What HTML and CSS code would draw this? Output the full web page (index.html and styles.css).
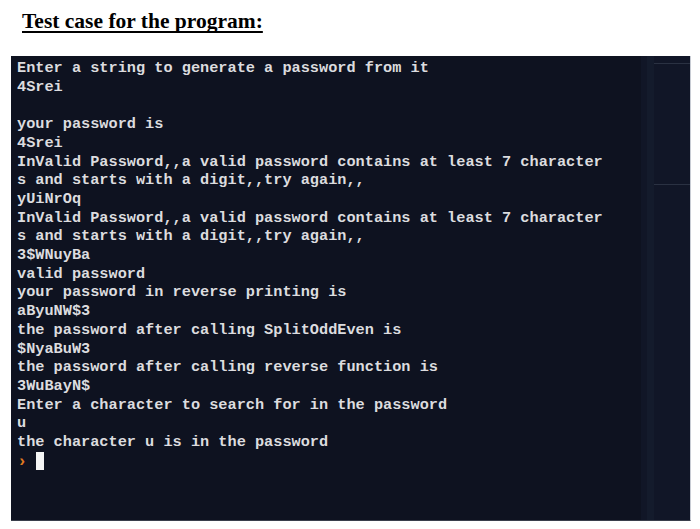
FILE: index.html
```html
<!DOCTYPE html>
<html>
<head>
<meta charset="utf-8">
<link rel="stylesheet" href="styles.css">
</head>
<body>
<h1 class="title">Test case for the program:</h1>
<div class="terminal">
  <pre class="output">Enter a string to generate a password from it
4Srei

your password is
4Srei
InValid Password,,a valid password contains at least 7 character
s and starts with a digit,,try again,,
yUiNrOq
InValid Password,,a valid password contains at least 7 character
s and starts with a digit,,try again,,
3$WNuyBa
valid password
your password in reverse printing is
aByuNW$3
the password after calling SplitOddEven is
$NyaBuW3
the password after calling reverse function is
3WuBayN$
Enter a character to search for in the password
u
the character u is in the password
<span class="prompt">›</span> <span class="cursor"></span></pre>
  <div class="side">
    <div class="side-strip"></div>
    <div class="side-body">
      <div class="side-line first"></div>
      <div class="side-line second"></div>
    </div>
  </div>
</div>
</body>
</html>
```

FILE: styles.css
```css
html, body {
  margin: 0;
  padding: 0;
  background: #ffffff;
}
body {
  width: 700px;
  height: 529px;
  overflow: hidden;
}
.title {
  margin: 0;
  padding: 9px 0 0 22px;
  height: 56px;
  box-sizing: border-box;
  font-family: "Liberation Serif", "Times New Roman", serif;
  font-weight: bold;
  font-size: 21.5px;
  line-height: 24px;
  color: #000;
  text-decoration: underline;
  text-decoration-thickness: 2px;
  text-underline-offset: 3px;
  text-decoration-skip-ink: none;
}
.terminal {
  margin: 0 9px 0 11px;
  height: 465px;
  background: #0e1220;
  display: flex;
  border-right: 1px solid #c8ccd4;
  border-bottom: 1px solid #3a3f4c;
  box-sizing: border-box;
}
.output {
  flex: 1;
  margin: 0;
  padding: 3px 0 0 6px;
  font-family: "Liberation Mono", "Courier New", monospace;
  font-size: 15.25px;
  line-height: 18.7px;
  font-weight: bold;
  color: #dcdcdf;
  white-space: pre;
  overflow: hidden;
}
.prompt {
  color: #e07a20;
  font-size: 17px;
}
.cursor {
  display: inline-block;
  width: 8px;
  height: 18px;
  background: #f4f4f4;
  vertical-align: -4px;
}
.side {
  width: 49px;
  display: flex;
  background: #111627;
}
.side-strip {
  width: 7px;
  margin-left: 6px;
  background: #141b2c;
}
.side-body {
  flex: 1;
  position: relative;
}
.side-line {
  height: 1px;
  background: #2a3142;
}
.side-line.first {
  margin-top: 7px;
}
.side-line.second {
  margin-top: 120px;
}
```
